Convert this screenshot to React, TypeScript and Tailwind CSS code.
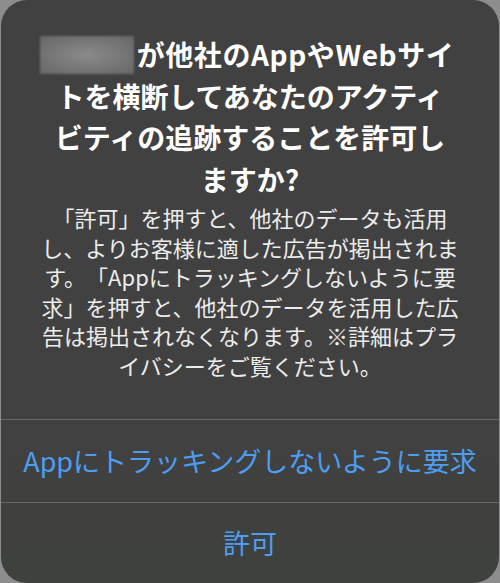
const jp = "font-['Noto_Sans_CJK_JP','Noto_Sans',sans-serif]";

const titleLines = [
  "トを横断してあなたのアクティ",
  "ビティの追跡することを許可し",
  "ますか?",
];

const bodyLines = [
  "「許可」を押すと、他社のデータも活用",
  "し、よりお客様に適した広告が掲出されま",
  "す。「Appにトラッキングしないように要",
  "求」を押すと、他社のデータを活用した広",
  "告は掲出されなくなります。※詳細はプラ",
  "イバシーをご覧ください。",
];

function ActionButton({ children, className }: { children: React.ReactNode; className?: string }) {
  return (
    <button
      type="button"
      className={`flex w-full items-center justify-center border-t border-[#676767] text-[27px] font-normal text-[#4d9ef2] ${className ?? ""}`}
    >
      {children}
    </button>
  );
}

export default function App() {
  return (
    <div className={`h-[583px] w-[500px] bg-[#8d8d8d] px-px ${jp} [text-spacing-trim:space-all]`}>
      <div className="flex h-full flex-col overflow-hidden rounded-[26px] bg-[linear-gradient(to_bottom,#414141_0%,#414141_70%,#3f413d_100%)]">
        {/* Title */}
        <div className="pt-[34px] text-center text-[28px] font-bold leading-[41.5px] text-white">
          <div className="flex items-center justify-center whitespace-nowrap pr-[6px]">
            <span className="mr-[3px] inline-block h-[38px] w-[94px] bg-[radial-gradient(ellipse_at_center,#8a8a8a,#666666)] blur-[1px]" />
            <span className="tracking-[0.6px]">が他社のAppやWebサイ</span>
          </div>
          {titleLines.map((line) => (
            <div key={line} className="whitespace-nowrap">
              {line}
            </div>
          ))}
        </div>

        {/* Message */}
        <div className="mt-[3px] pb-[39px] text-center text-[22px] leading-[29.5px] text-[#ececec]">
          {bodyLines.map((line) => (
            <div key={line} className="whitespace-nowrap">
              {line}
            </div>
          ))}
        </div>

        {/* Actions */}
        <ActionButton className="h-[83px]">Appにトラッキングしないように要求</ActionButton>
        <ActionButton className="flex-1">許可</ActionButton>
      </div>
    </div>
  );
}
